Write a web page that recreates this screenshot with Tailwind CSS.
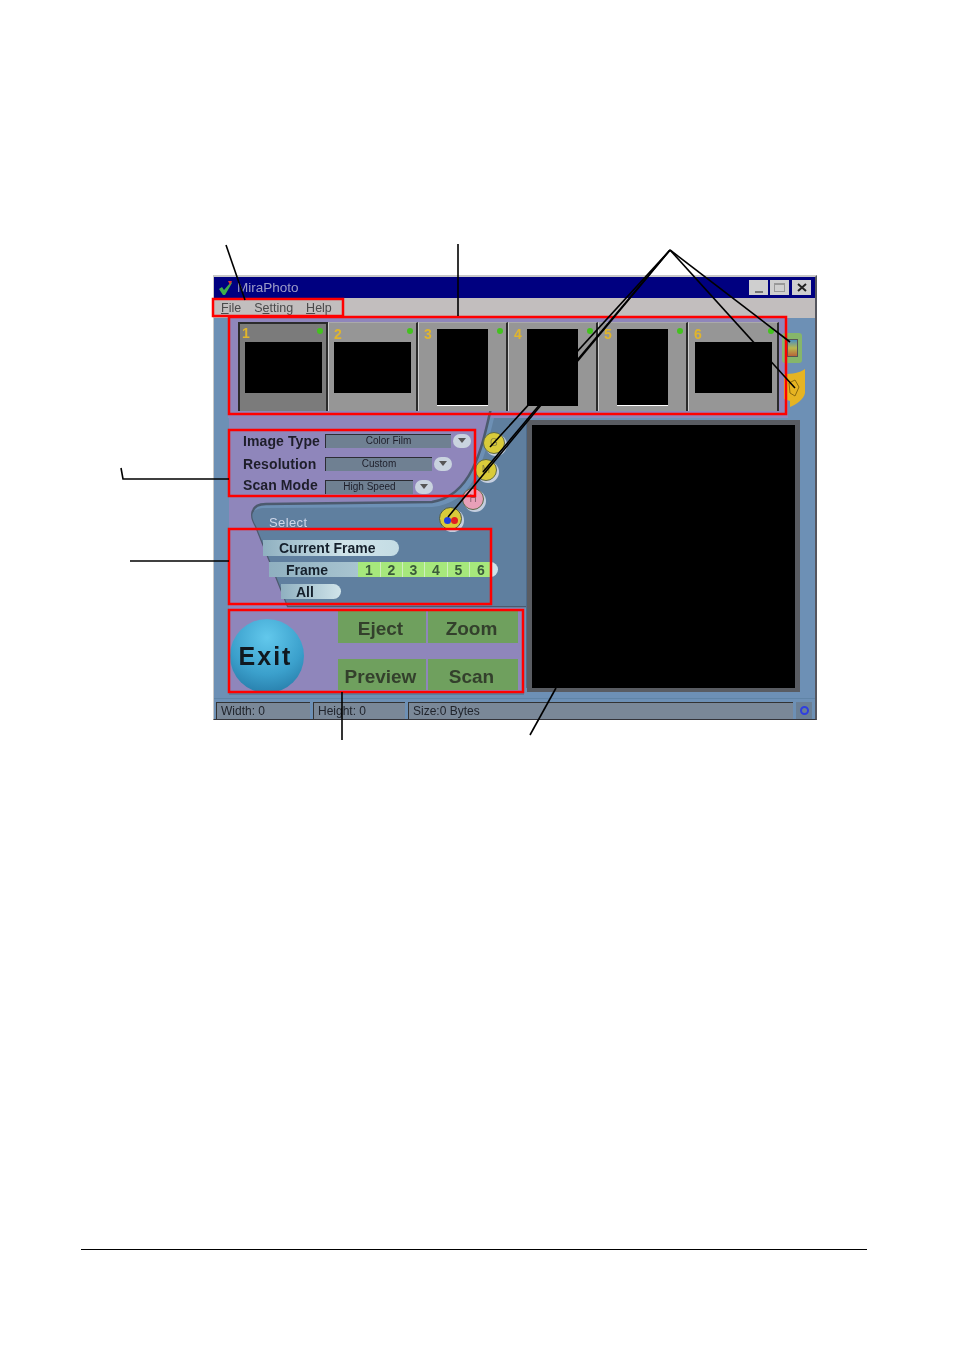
<!DOCTYPE html>
<html>
<head>
<meta charset="utf-8">
<script src="https://cdn.jsdelivr.net/npm/@tailwindcss/browser@4"></script>
</head>
<body class="bg-white">
<div class="relative w-[954px] h-[1352px] overflow-hidden bg-white font-['Liberation_Sans',Arial,sans-serif]">

  <!-- Application window -->
  <div class="absolute left-[213px] top-[275px] w-[604px] h-[445px] flex flex-col bg-[#6d90b5] border-t-2 border-l border-r-2 border-b border-t-[#c8c8c8] border-l-[#c8c8c8] border-r-[#55565e] border-b-[#33343a] blur-[0.7px]">
    <!-- Title bar -->
    <div class="h-[21px] shrink-0 bg-[#000080] flex items-center pl-[4px] pr-[4px]">
      <svg class="w-[15px] h-[16px]" viewBox="0 0 15 16"><path d="M1 9l3-2 2 3 7-8 1 1-7 12-2 0z" fill="#3fae4a"/><path d="M10 1l4 0-2 4z" fill="#e03030"/></svg>
      <span class="ml-[4px] text-[13.500px] leading-none text-[#9c9cc8]">MiraPhoto</span>
      <div class="ml-auto flex gap-[2px]">
        <div class="w-[19px] h-[15px] bg-[#cfcfcf] flex items-end justify-center pb-[2px]"><div class="w-[8px] h-[2px] bg-[#777]"></div></div>
        <div class="w-[19px] h-[15px] bg-[#cfcfcf] flex items-center justify-center"><div class="w-[11px] h-[9px] border border-[#999] border-t-2"></div></div>
        <div class="ml-[1px] w-[19px] h-[15px] bg-[#cfcfcf] flex items-center justify-center">
          <svg class="w-[10px] h-[9px]" viewBox="0 0 10 9"><path d="M1 1l8 7M9 1l-8 7" stroke="#222" stroke-width="2"/></svg>
        </div>
      </div>
    </div>
    <!-- Menu -->
    <div class="h-[20px] shrink-0 bg-[#c2bebe] flex items-center text-[12.500px] text-[#4a4a4a] pl-[7px]">
      <span><u>F</u>ile</span>
      <span class="ml-[13px]">S<u>e</u>tting</span>
      <span class="ml-[13px]"><u>H</u>elp</span>
    </div>

    <!-- Body -->
    <div class="relative flex-1 min-h-0 flex flex-col">
      <!-- Decorative panel behind the controls -->
      <svg class="absolute left-0 top-0 w-[601px] h-[381px]" viewBox="0 0 601 381">
        <rect x="0" y="0" width="601" height="381" fill="#6d90b5"/>
        <rect x="14" y="0" width="560" height="100" fill="#8f86bb"/>
        <path d="M277 90 C268 130 258 178 218 184 L52 186 C36 186 36 198 42 208 L74 288 L310 290 L310 375 L15 375 L15 90 Z" fill="#8f86bb"/>
        <path d="M277 90 C268 130 258 178 218 184 L52 186 C36 186 36 198 42 208 L74 288 L312 288" fill="none" stroke="#4c5a6e" stroke-width="2.5"/>
        <path d="M42 208 L74 288 L312 288 L312 100 L280 100 C268 150 258 185 218 189 L52 190 C36 190 36 198 42 208 Z" fill="#5f7f9f"/>
        <rect x="312" y="100" width="3" height="270" fill="#4e6c8c"/>
        <path d="M0 381.500H601" stroke="#3f5f7e" stroke-width="1.5"/>
        <path d="M15 376H310" stroke="#5c7e9e" stroke-width="2"/>
      </svg>

      <!-- Thumbnails -->
      <div class="relative mt-[4px] ml-[24px] w-[541px] h-[89px] flex shrink-0 bg-[#333]">
        <div class="relative w-[90px] h-full flex items-center justify-center bg-[#7b7b7b] border-l-2 border-t-2 border-r-2 border-[#2b2b2b]"><span class="absolute left-[2px] top-[2px] text-[14px] font-bold leading-none text-[#e0b52c]">1</span><span class="absolute right-[3px] top-[4px] w-[6px] h-[6px] rounded-full bg-[#43c31e]"></span><div class="w-[77px] h-[51px] bg-black"></div></div>
        <div class="relative w-[90px] h-full flex items-center justify-center bg-[#969696] border-l border-t border-r-2 border-t-[#aaa] border-l-[#ccc] border-r-[#2b2b2b]"><span class="absolute left-[5px] top-[4px] text-[14px] font-bold leading-none text-[#e0b52c]">2</span><span class="absolute right-[3px] top-[5px] w-[6px] h-[6px] rounded-full bg-[#43c31e]"></span><div class="w-[77px] h-[51px] bg-black"></div></div>
        <div class="relative w-[90px] h-full flex items-center justify-center bg-[#969696] border-l border-t border-r-2 border-t-[#aaa] border-l-[#ccc] border-r-[#2b2b2b]"><span class="absolute left-[5px] top-[4px] text-[14px] font-bold leading-none text-[#e0b52c]">3</span><span class="absolute right-[3px] top-[5px] w-[6px] h-[6px] rounded-full bg-[#43c31e]"></span><div class="w-[51px] h-[77px] bg-black border-b border-white"></div></div>
        <div class="relative w-[90px] h-full flex items-center justify-center bg-[#969696] border-l border-t border-r-2 border-t-[#aaa] border-l-[#ccc] border-r-[#2b2b2b]"><span class="absolute left-[5px] top-[4px] text-[14px] font-bold leading-none text-[#e0b52c]">4</span><span class="absolute right-[3px] top-[5px] w-[6px] h-[6px] rounded-full bg-[#43c31e]"></span><div class="w-[51px] h-[77px] bg-black"></div></div>
        <div class="relative w-[90px] h-full flex items-center justify-center bg-[#969696] border-l border-t border-r-2 border-t-[#aaa] border-l-[#ccc] border-r-[#2b2b2b]"><span class="absolute left-[5px] top-[4px] text-[14px] font-bold leading-none text-[#e0b52c]">5</span><span class="absolute right-[3px] top-[5px] w-[6px] h-[6px] rounded-full bg-[#43c31e]"></span><div class="w-[51px] h-[77px] bg-black border-b border-white"></div></div>
        <div class="relative w-[91px] h-full flex items-center justify-center bg-[#969696] border-l border-t border-r-2 border-t-[#aaa] border-l-[#ccc] border-r-[#2b2b2b]"><span class="absolute left-[5px] top-[4px] text-[14px] font-bold leading-none text-[#e0b52c]">6</span><span class="absolute right-[3px] top-[5px] w-[6px] h-[6px] rounded-full bg-[#43c31e]"></span><div class="w-[77px] h-[51px] bg-black"></div></div>
      </div>

      <!-- Side tool icons -->
      <div class="absolute left-[568px] top-[15px] w-[20px] h-[30px] rounded-[3px] bg-[#86b66a] flex items-center justify-center">
        <div class="w-[11px] h-[18px] bg-[linear-gradient(#4a8fc0,#b9b84e_50%,#b9663a)] border border-[#555]"></div>
      </div>
      <svg class="absolute left-[568px] top-[51px] w-[24px] h-[38px]" viewBox="0 0 24 38"><path d="M2 5 C10 5 18 4 23 0 L23 24 C22 30 14 36 8 38 L8 32 L2 30 Z" fill="#e6b422"/><path d="M7 14l6 -3 4 7-4 9-5-3z" fill="none" stroke="#8a6a10"/></svg>

      <div class="relative flex min-h-0 flex-1">
        <!-- Left controls -->
        <div class="w-[313px] shrink-0 flex flex-col">
          <div class="mt-[22px] pl-[29px] flex flex-col gap-[8px] text-[14px] tracking-[0.1px] font-bold text-[#1e1e2a] leading-none">
            <div class="h-[15px] flex items-center">
              <span class="w-[82px]">Image Type</span>
              <div class="w-[126px] h-[14px] bg-[#6f8092] border-t border-l border-[#2c2c34] flex items-center justify-center text-[10px] tracking-normal font-normal">Color Film</div>
              <div class="ml-[2px] w-[18px] h-[14px] rounded-full bg-[#c9d3df] flex items-center justify-center"><div class="border-x-[4px] border-t-[5px] border-x-transparent border-t-[#555]"></div></div>
            </div>
            <div class="h-[15px] flex items-center">
              <span class="w-[82px]">Resolution</span>
              <div class="w-[107px] h-[14px] bg-[#6f8092] border-t border-l border-[#2c2c34] flex items-center justify-center text-[10px] tracking-normal font-normal">Custom</div>
              <div class="ml-[2px] w-[18px] h-[14px] rounded-full bg-[#c9d3df] flex items-center justify-center"><div class="border-x-[4px] border-t-[5px] border-x-transparent border-t-[#555]"></div></div>
            </div>
            <div class="h-[15px] flex items-center">
              <span class="w-[82px] -translate-y-[2px]">Scan Mode</span>
              <div class="w-[88px] h-[14px] bg-[#6f8092] border-t border-l border-[#2c2c34] flex items-center justify-center text-[10px] tracking-normal font-normal">High Speed</div>
              <div class="ml-[2px] w-[18px] h-[14px] rounded-full bg-[#c9d3df] flex items-center justify-center"><div class="border-x-[4px] border-t-[5px] border-x-transparent border-t-[#555]"></div></div>
            </div>
          </div>

          <div class="mt-[22px] ml-[55px] text-[13px] tracking-[0.4px] leading-[13px] text-[#cfd6e8]">Select</div>

          <div class="mt-[11px] ml-[49px] w-[136px] h-[16px] rounded-r-full rounded-l-[4px] bg-[linear-gradient(90deg,#8fb0c0,#d0e4ea_60%,#c4dce4)] flex items-center pl-[16px] text-[14px] font-bold text-[#15202c] leading-none">Current Frame</div>

          <div class="mt-[6px] ml-[55px] w-[229px] h-[15px] rounded-r-full rounded-l-[4px] bg-[linear-gradient(90deg,#8fb0c0,#d0e4ea)] flex items-center text-[14px] font-bold text-[#15202c] leading-none overflow-hidden">
            <span class="w-[89px] pl-[17px]">Frame</span>
            <div class="flex text-[#3a5a3a] font-bold">
              <span class="w-[23px] h-[15px] bg-[#a6e87c] flex items-center justify-center border-r border-[#cfeec0]">1</span>
              <span class="w-[22px] h-[15px] bg-[#a6e87c] flex items-center justify-center border-r border-[#cfeec0]">2</span>
              <span class="w-[22px] h-[15px] bg-[#a6e87c] flex items-center justify-center border-r border-[#cfeec0]">3</span>
              <span class="w-[23px] h-[15px] bg-[#a6e87c] flex items-center justify-center border-r border-[#cfeec0]">4</span>
              <span class="w-[22px] h-[15px] bg-[#a6e87c] flex items-center justify-center border-r border-[#cfeec0]">5</span>
              <span class="w-[22px] h-[15px] bg-[#a6e87c] flex items-center justify-center">6</span>
            </div>
          </div>

          <div class="mt-[7px] ml-[67px] w-[60px] h-[15px] rounded-r-full rounded-l-[4px] bg-[linear-gradient(90deg,#8fb0c0,#d0e4ea)] flex items-center pl-[15px] text-[14px] font-bold text-[#15202c] leading-none">All</div>

          <!-- Exit and action buttons -->
          <div class="mt-[11px] ml-[16px] flex h-[80px]">
            <div class="mt-[9px] w-[74px] h-[74px] rounded-full bg-[radial-gradient(circle_at_50%_25%,#62c8ec,#3ba0cc_55%,#1f6f9c)] flex items-center justify-center pr-[3px] text-[25px] font-bold text-[#10181f] tracking-[2px] leading-none">Exit</div>
            <div class="ml-[34px] w-[180px] grid grid-cols-[88px_90px] grid-rows-[33px_31px] gap-x-[2px] gap-y-[16px] text-[#33402c] text-[19px] font-bold leading-none">
              <div class="bg-[#6fa05e] flex items-center justify-center pt-[3px] pr-[3px]">Eject</div>
              <div class="bg-[#6fa05e] flex items-center justify-center pt-[3px] pr-[3px]">Zoom</div>
              <div class="bg-[#6fa05e] flex items-center justify-center pt-[3px] pr-[3px]">Preview</div>
              <div class="bg-[#6fa05e] flex items-center justify-center pt-[3px] pr-[3px]">Scan</div>
            </div>
          </div>
        </div>

        <!-- Preview pane -->
        <div class="mt-[9px] w-[273px] h-[272px] bg-[#595c62] p-[5px] pb-[4px] shrink-0">
          <div class="w-full h-full bg-black"></div>
        </div>
      </div>

      <!-- Round tool buttons on the curve -->
      <div class="absolute left-[269px] top-[114px] w-[22px] h-[22px] rounded-full bg-[#d9cb3a] border border-[#5f6a48] shadow-[2px_2px_0_#c5cfe0] flex items-center justify-center text-[10px] leading-none text-[#8a8440]">G</div>
      <div class="absolute left-[261px] top-[141px] w-[22px] h-[22px] rounded-full bg-[#d9cb3a] border border-[#5f6a48] shadow-[2px_2px_0_#c5cfe0] flex items-center justify-center text-[10px] leading-none text-[#8a8440]">M</div>
      <div class="absolute left-[248px] top-[170px] w-[22px] h-[22px] rounded-full bg-[#e8a0b8] border border-[#5f6a48] shadow-[2px_2px_0_#c5cfe0] flex items-center justify-center text-[10px] leading-none text-[#8a6070]">H</div>
      <div class="absolute left-[225px] top-[189px] w-[23px] h-[23px] rounded-full bg-[#d9cb3a] border border-[#4e5a48] shadow-[2px_2px_0_#c5cfe0] flex items-center justify-center gap-0 pt-[4px]">
        <span class="w-[7px] h-[7px] rounded-full bg-[#1f3fe0]"></span><span class="w-[7px] h-[7px] rounded-full bg-[#e02020]"></span>
      </div>

      <!-- Status bar -->
      <div class="h-[17px] shrink-0 mx-[2px] flex gap-[3px] text-[12px] text-[#20242c] leading-none">
        <div class="w-[94px] h-full bg-[#7a8898] border-l border-t border-[#333] pl-[4px] flex items-center">Width: 0</div>
        <div class="w-[92px] h-full bg-[#7a8898] border-l border-t border-[#333] pl-[4px] flex items-center">Height: 0</div>
        <div class="w-[385px] h-full bg-[#7a8898] border-l border-t border-[#333] pl-[4px] flex items-center">Size:0 Bytes</div>
        <div class="w-[16px] h-full bg-[#6a7f95] flex items-center justify-center">
          <div class="w-[9px] h-[9px] rounded-full border-2 border-[#2f3fe0]"></div>
        </div>
      </div>
    </div>
  </div>

  <!-- Callout overlay -->
  <svg class="absolute inset-0 w-[954px] h-[1352px] pointer-events-none" viewBox="0 0 954 1352" fill="none">
    <g stroke="#f00" stroke-width="2.5">
      <rect x="213" y="299" width="130" height="17"/>
      <rect x="229" y="317" width="557" height="97"/>
      <rect x="229" y="430" width="246" height="66"/>
      <rect x="229" y="529" width="262" height="75"/>
      <rect x="229" y="610" width="294" height="82"/>
    </g>
    <g stroke="#000" stroke-width="1.600">
      <path d="M226 245L245 300"/>
      <path d="M458 244V316"/>
      <path d="M670 250L790 342"/>
      <path d="M670 250L795 388"/>
      <path d="M670 250L490 447"/>
      <path d="M670 250L483 472"/>
      <path d="M670 250L448 517"/>
      <path d="M121 468L123 479H229"/>
      <path d="M130 561H229"/>
      <path d="M342 692V740"/>
      <path d="M556 688L530 735"/>
      <path d="M81 1249.500H867" stroke-width="1"/>
    </g>
  </svg>
</div>
</body>
</html>
